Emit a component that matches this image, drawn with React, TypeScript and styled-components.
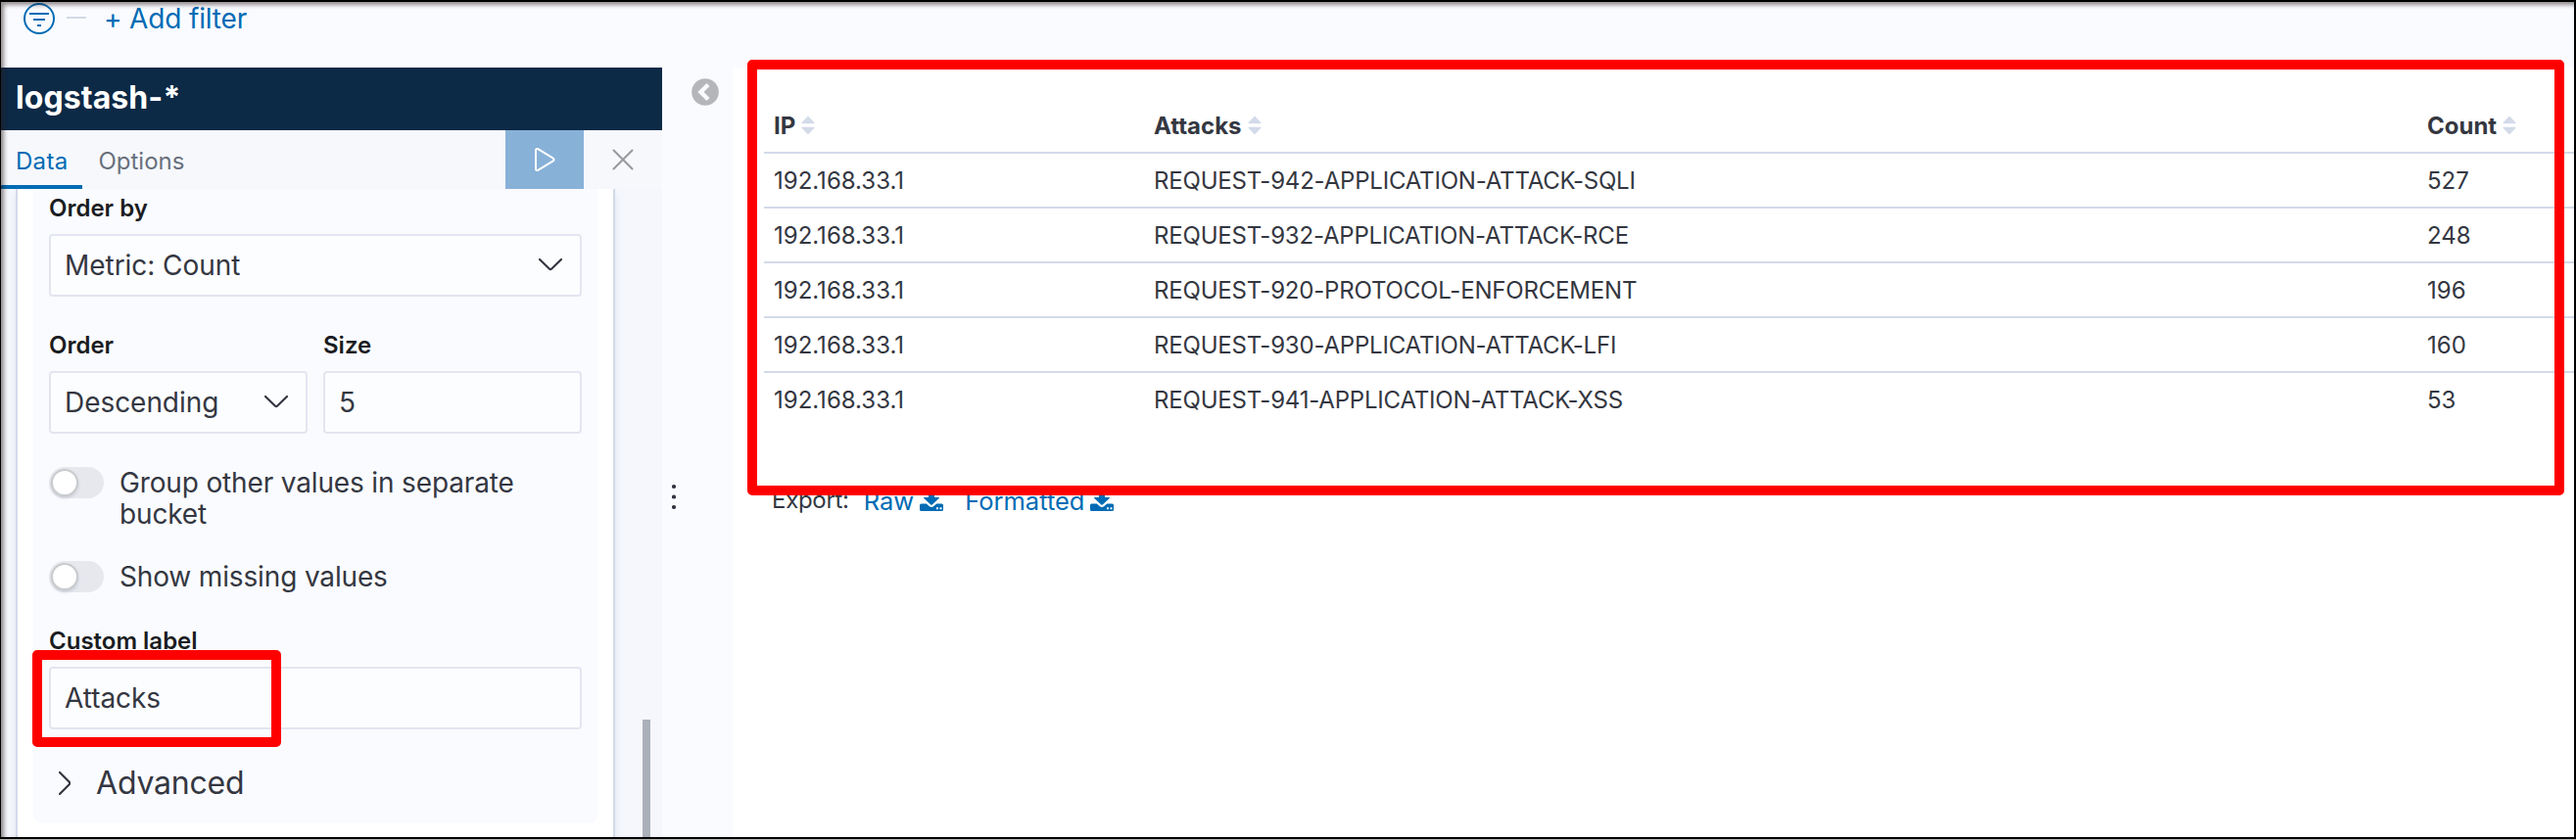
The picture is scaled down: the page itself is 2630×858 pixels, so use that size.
import React from 'react';
import styled, { createGlobalStyle } from 'styled-components';

const GlobalStyle = createGlobalStyle`
  *, *::before, *::after { box-sizing: border-box; }
  html, body { margin: 0; padding: 0; background: #fff; }
  body { font-family: Inter, 'Liberation Sans', sans-serif; color: #343741; }
`;

const Page = styled.div`
  position: relative;
  width: 2630px;
  height: 858px;
  overflow: hidden;
  display: flex;
  flex-direction: column;
  background: #fafbff;
`;

const WindowFrame = styled.div`
  position: absolute;
  inset: 0 0 1px 0;
  border: solid #000;
  border-width: 2px 2px 2px 1px;
  box-shadow: inset 3px 3px 4px rgba(40, 30, 30, 0.5), 0 1px 0 #b5b5b3;
  pointer-events: none;
`;

const FilterBar = styled.header`
  flex: none;
  height: 69px;
  padding: 3px 0 0 24px;
  display: flex;
  align-items: flex-start;
`;

const FilterDash = styled.span`
  width: 20px;
  height: 2px;
  margin: 14px 18px 0 12px;
  background: #d3dae6;
`;

const AddFilter = styled.a`
  font-size: 28px;
  line-height: 32px;
  color: #006bb4;
  white-space: nowrap;
  letter-spacing: -0.15px;
`;

const Main = styled.main`
  flex: 1;
  min-height: 0;
  display: flex;
`;

const Sidebar = styled.aside`
  flex: none;
  width: 676px;
  display: flex;
  flex-direction: column;
  background: #f5f7fc;
`;

const IndexTitle = styled.h2`
  flex: none;
  margin: 0;
  height: 64px;
  padding-left: 16px;
  font-size: 32px;
  font-weight: 700;
  line-height: 61px;
  letter-spacing: 0.08px;
  color: #fff;
  background: #0c2946;
`;

const TabBar = styled.nav`
  flex: none;
  display: flex;
  height: 60px;
  background: #f6f8fc;
`;

const Tab = styled.span<{ $active?: boolean }>`
  padding: 4px 15px 0 16px;
  font-size: 24px;
  line-height: 56px;
  letter-spacing: ${(p) => (p.$active ? '0.3px' : '0')};
  color: ${(p) => (p.$active ? '#006bb4' : '#69707d')};
  border-bottom: ${(p) => (p.$active ? '4px solid #006bb4' : '0')};
`;

const TabAction = styled.button<{ $primary?: boolean }>`
  width: 80px;
  height: 60px;
  padding: 0;
  border: 0;
  display: flex;
  align-items: center;
  justify-content: center;
  background: ${(p) => (p.$primary ? '#88b1d8' : 'transparent')};
  margin-left: ${(p) => (p.$primary ? 'auto' : '0')};
`;

const EditorScroll = styled.div`
  flex: 1;
  min-height: 0;
  display: flex;
  overflow: hidden;
  padding-left: 16px;
`;

const AggCard = styled.section`
  width: 612px;
  padding: 0 16px 17px;
  background: #fff;
  border: solid #d3dae9;
  border-width: 0 2px;
  box-shadow: 0 4px 8px rgba(152, 162, 179, 0.2);
`;

const AggPanel = styled.div`
  height: 648px;
  padding: 6px 16px 0;
  background: #fafbff;
  border-radius: 0 0 8px 8px;
`;

const Scrollbar = styled.div`
  width: 8px;
  margin: 542px 0 0 28px;
  background: #abb1b9;
`;

const FieldRow = styled.div`
  display: flex;
  gap: 16px;
  margin-bottom: 36px;
`;

const Field = styled.label`
  flex: 1;
  display: flex;
  flex-direction: column;
  gap: 12px;
`;

const FieldLabel = styled.span`
  font-size: 24px;
  font-weight: 600;
  line-height: 28px;
  color: #1a1c21;
`;

const Control = styled.div`
  height: 64px;
  padding: 0 18px 0 14px;
  display: flex;
  align-items: center;
  justify-content: space-between;
  border: 2px solid #e3e5f0;
  border-radius: 4px;
  background: #fcfdff;
  font-size: 28px;
  line-height: 32px;
  letter-spacing: -0.05px;
`;

const ToggleList = styled.div`
  display: flex;
  flex-direction: column;
  gap: 32px;
  margin: -2px 0 36px;
`;

const ToggleRow = styled.div`
  display: flex;
  gap: 16px;
  font-size: 28px;
  line-height: 32px;
  letter-spacing: -0.15px;
`;

const ToggleTrack = styled.span`
  flex: none;
  width: 56px;
  height: 32px;
  padding: 2px;
  border-radius: 16px;
  background: #e7e8ee;
`;

const ToggleThumb = styled.span`
  display: block;
  width: 28px;
  height: 28px;
  border: 2px solid #c9cbcd;
  border-radius: 50%;
  background: #fff;
  box-shadow: 0 2px 3px rgba(120, 130, 150, 0.25);
`;

const AdvancedToggle = styled.div`
  display: flex;
  align-items: center;
  gap: 26px;
  padding-left: 10px;
  font-size: 32px;
  line-height: 38px;
  letter-spacing: -0.2px;
`;

const Gutter = styled.div`
  flex: none;
  width: 72px;
  display: flex;
  flex-direction: column;
`;

const CollapseSlot = styled.div`
  padding: 10.5px 0 0 30px;
  height: 425px;
`;

const DragSlot = styled.div`
  padding-left: 10px;
`;

const Visualization = styled.section`
  flex: 1;
  min-width: 0;
  padding: 30px 0 0 32px;
  background: #fff;
`;

const ResultTable = styled.div`
  display: flex;
  flex-direction: column;
`;

const ResultRow = styled.div<{ $head?: boolean; $last?: boolean }>`
  display: grid;
  grid-template-columns: 388px 1300px 1fr;
  height: ${(p) => (p.$head ? '58px' : '56px')};
  padding: ${(p) => (p.$head ? '2px' : '0')} 0 0 10px;
  border-bottom: 2px solid ${(p) => (p.$last ? 'transparent' : '#d3dae9')};
  font-size: 24px;
  font-weight: ${(p) => (p.$head ? 700 : 400)};
`;

const Cell = styled.div<{ $tight?: boolean }>`
  display: flex;
  align-items: center;
  gap: 6px;
  white-space: nowrap;
  letter-spacing: ${(p) => (p.$tight ? '-0.19px' : '0')};
`;

const ExportBar = styled.div`
  display: flex;
  align-items: flex-start;
  margin-top: 59px;
  padding-left: 8px;
  font-size: 24px;
  line-height: 30px;
  letter-spacing: -0.3px;
`;

const ExportLink = styled.a<{ $gap: number }>`
  display: flex;
  align-items: center;
  gap: 6px;
  margin: 1px 0 0 ${(p) => p.$gap}px;
  font-size: 25.5px;
  letter-spacing: 0;
  color: #006bb4;
`;

const Highlight = styled.div<{ $x: number; $y: number; $w: number; $h: number }>`
  position: absolute;
  left: ${(p) => p.$x}px;
  top: ${(p) => p.$y}px;
  width: ${(p) => p.$w}px;
  height: ${(p) => p.$h}px;
  border: 10px solid #f00;
  border-radius: 5px;
`;

const FilterIcon = () => (
  <svg width="32" height="32" viewBox="0 0 32 32" fill="none" stroke="#006bb4" strokeWidth="2">
    <circle cx="16" cy="16" r="15" />
    <path d="M6 11h20M10 17h12M14 23h4" />
  </svg>
);

const PlayIcon = () => (
  <svg width="32" height="32" viewBox="0 0 32 32" fill="none" stroke="#fff" strokeWidth="2" strokeLinejoin="round">
    <path d="M7 6.2v19.6c0 1 1.2 1.6 2.2 1l15.6-9.4c1-.7 1-2 0-2.7L9.2 5.2C8.2 4.6 7 5.2 7 6.2Z" />
  </svg>
);

const CloseIcon = () => (
  <svg width="32" height="32" viewBox="0 0 32 32" fill="none" stroke="#98999d" strokeWidth="2">
    <path d="M6.5 6.5l19 19M25.5 6.5l-19 19" strokeLinecap="round" />
  </svg>
);

const ChevronDown = () => (
  <svg width="24" height="14" viewBox="0 0 24 14" fill="none" stroke="#343741" strokeWidth="2.2" strokeLinecap="round">
    <path d="M1 1l9.800 9.500c.7.650 1.700.650 2.400 0L23 1" />
  </svg>
);

const ChevronRight = () => (
  <svg width="12" height="24" viewBox="0 0 12 24" fill="none" stroke="#343741" strokeWidth="2.2" strokeLinecap="round">
    <path d="M1 1l9.700 9.800c.6.700.6 1.700 0 2.400L1 23" />
  </svg>
);

const CollapseIcon = () => (
  <svg width="28" height="28" viewBox="0 0 28 28">
    <circle cx="14" cy="14" r="13.8" fill="#b5b6ba" />
    <path d="M17 6.5L9.500 14l7.500 7.500" fill="none" stroke="#fafbff" strokeWidth="4.4" />
  </svg>
);

const GripIcon = () => (
  <svg width="4" height="28" viewBox="0 0 4 28" fill="#343741">
    <circle cx="2" cy="3" r="2.1" />
    <circle cx="2" cy="13.5" r="2.1" />
    <circle cx="2" cy="24" r="2.1" />
  </svg>
);

const SortIcon = () => (
  <svg width="14" height="20" viewBox="0 0 14 20" fill="#d3dae9">
    <path d="M7 .5L13.500 7.200q.5 1-.6 1H1.100q-1.100 0-.6-1ZM7 19.500L13.500 12.800q.5-1-.6-1H1.100q-1.100 0-.6 1Z" />
  </svg>
);

const DownloadIcon = () => (
  <svg width="24" height="24" viewBox="0 0 24 24" fill="#006bb4">
    <path d="M9 0h6v8h4.300q1.200.2.400 1.100l-7 6.300q-.7.500-1.400 0l-7-6.300q-.8-.9.400-1.100H9Z" />
    <path
      fillRule="evenodd"
      d="M1.500 14.500h5.300l3.100 2.800q2.100 1.500 4.200 0l3.100-2.800h5.300q1.500 0 1.500 1.500v4.500q0 1.500-1.500 1.500h-21Q0 22 0 20.500V16q0-1.500 1.500-1.500ZM17 18.200v2h2v-2ZM20.500 18.200v2h2v-2Z"
    />
  </svg>
);

const rows = [
  ['192.168.33.1', 'REQUEST-942-APPLICATION-ATTACK-SQLI', '527'],
  ['192.168.33.1', 'REQUEST-932-APPLICATION-ATTACK-RCE', '248'],
  ['192.168.33.1', 'REQUEST-920-PROTOCOL-ENFORCEMENT', '196'],
  ['192.168.33.1', 'REQUEST-930-APPLICATION-ATTACK-LFI', '160'],
  ['192.168.33.1', 'REQUEST-941-APPLICATION-ATTACK-XSS', '53'],
];

const Toggle = ({ children }: { children: React.ReactNode }) => (
  <ToggleRow>
    <ToggleTrack>
      <ToggleThumb />
    </ToggleTrack>
    <span>{children}</span>
  </ToggleRow>
);

export default function App() {
  return (
    <>
      <GlobalStyle />
      <Page>
        <FilterBar>
          <FilterIcon />
          <FilterDash />
          <AddFilter>+ Add filter</AddFilter>
        </FilterBar>
        <Main>
          <Sidebar>
            <IndexTitle>logstash-*</IndexTitle>
            <TabBar>
              <Tab $active>Data</Tab>
              <Tab>Options</Tab>
              <TabAction $primary aria-label="Apply changes">
                <PlayIcon />
              </TabAction>
              <TabAction aria-label="Discard changes">
                <CloseIcon />
              </TabAction>
            </TabBar>
            <EditorScroll>
              <AggCard>
                <AggPanel>
                  <FieldRow>
                    <Field>
                      <FieldLabel>Order by</FieldLabel>
                      <Control>
                        Metric: Count
                        <ChevronDown />
                      </Control>
                    </Field>
                  </FieldRow>
                  <FieldRow>
                    <Field>
                      <FieldLabel>Order</FieldLabel>
                      <Control>
                        Descending
                        <ChevronDown />
                      </Control>
                    </Field>
                    <Field>
                      <FieldLabel>Size</FieldLabel>
                      <Control>5</Control>
                    </Field>
                  </FieldRow>
                  <ToggleList>
                    <Toggle>
                      Group other values in separate
                      <br />
                      bucket
                    </Toggle>
                    <Toggle>Show missing values</Toggle>
                  </ToggleList>
                  <FieldRow>
                    <Field>
                      <FieldLabel>Custom label</FieldLabel>
                      <Control>Attacks</Control>
                    </Field>
                  </FieldRow>
                  <AdvancedToggle>
                    <ChevronRight />
                    Advanced
                  </AdvancedToggle>
                </AggPanel>
              </AggCard>
              <Scrollbar />
            </EditorScroll>
          </Sidebar>
          <Gutter>
            <CollapseSlot>
              <CollapseIcon />
            </CollapseSlot>
            <DragSlot>
              <GripIcon />
            </DragSlot>
          </Gutter>
          <Visualization>
            <ResultTable>
              <ResultRow $head>
                {['IP', 'Attacks', 'Count'].map((name) => (
                  <Cell key={name}>
                    {name}
                    <SortIcon />
                  </Cell>
                ))}
              </ResultRow>
              {rows.map((row, i) => (
                <ResultRow key={row[1]} $last={i === rows.length - 1}>
                  {row.map((value, j) => (
                    <Cell key={j} $tight={j === 1}>
                      {value}
                    </Cell>
                  ))}
                </ResultRow>
              ))}
            </ResultTable>
            <ExportBar>
              <span>Export:</span>
              <ExportLink $gap={15}>
                Raw <DownloadIcon />
              </ExportLink>
              <ExportLink $gap={22}>
                Formatted <DownloadIcon />
              </ExportLink>
            </ExportBar>
          </Visualization>
        </Main>
        <Highlight $x={763} $y={61} $w={1855} $h={445} />
        <Highlight $x={33} $y={664} $w={254} $h={99} />
        <WindowFrame />
      </Page>
    </>
  );
}
